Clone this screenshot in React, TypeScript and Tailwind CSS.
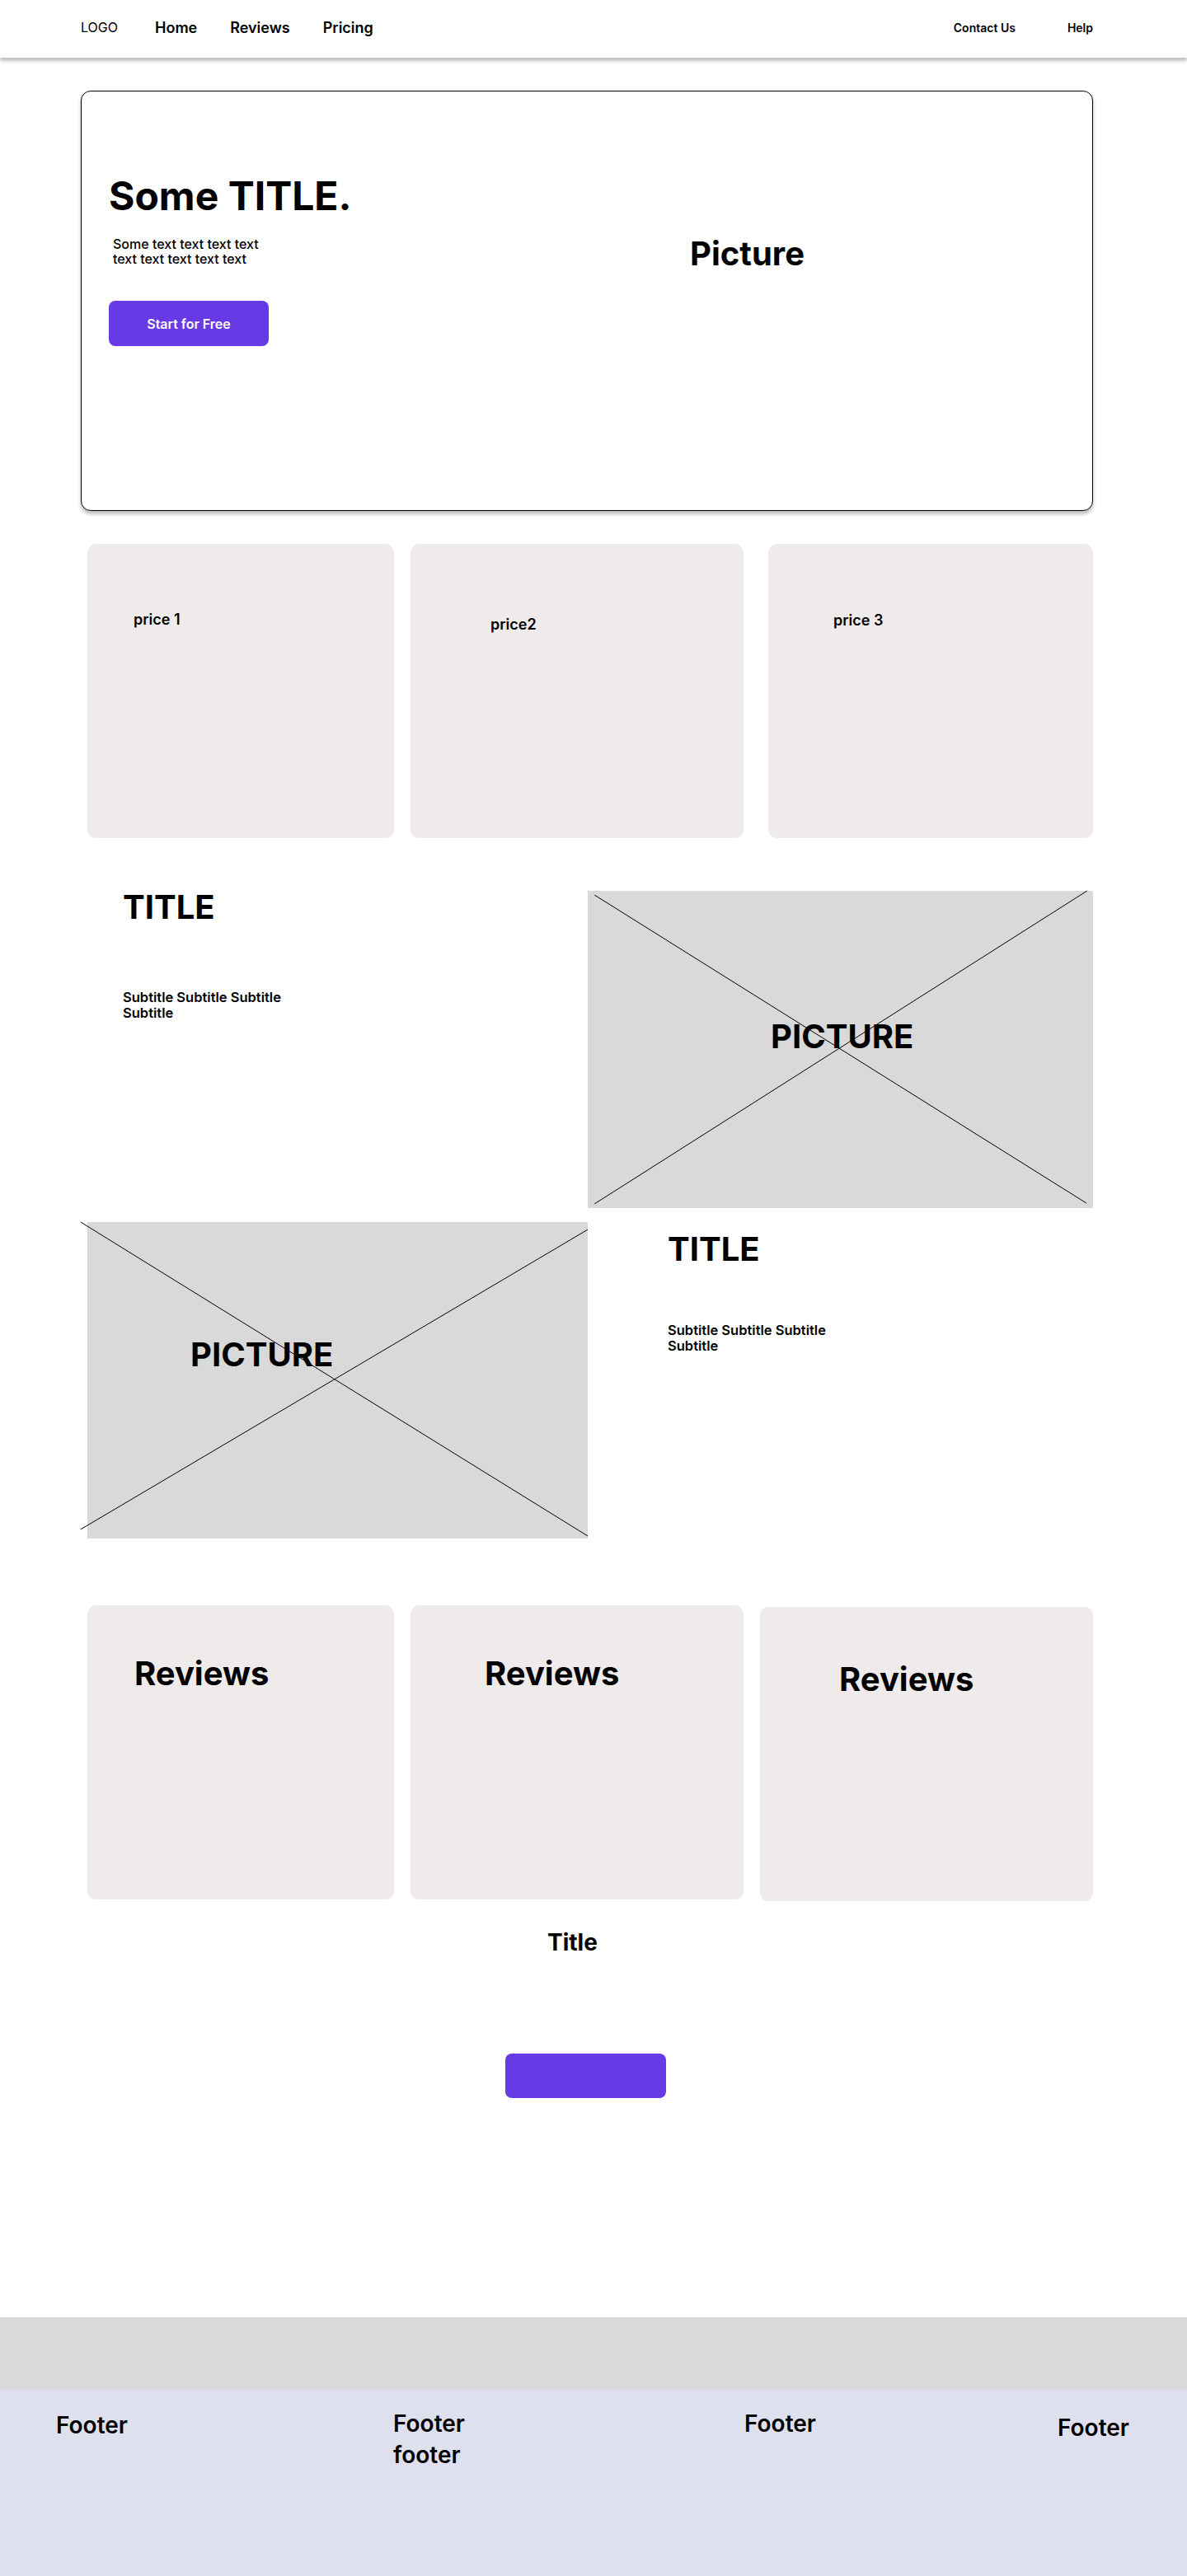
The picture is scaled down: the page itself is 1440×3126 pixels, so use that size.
import React from "react";

function CrossPicture({ label, labelClass, lines }: { label: string; labelClass: string; lines: { x1: number; y1: number; x2: number; y2: number }[] }) {
  return (
    <div className="relative h-full w-full bg-[#d9d9d9]">
      <svg className="absolute inset-0 h-full w-full overflow-visible" viewBox="0 0 600 380" preserveAspectRatio="none">
        {lines.map((l, i) => (
          <line key={i} x1={l.x1} y1={l.y1} x2={l.x2} y2={l.y2} stroke="#000" strokeWidth="1" vectorEffect="non-scaling-stroke" />
        ))}
      </svg>
      <div className={`relative text-[40px] font-bold leading-none text-black ${labelClass}`}>{label}</div>
    </div>
  );
}

export default function App() {
  return (
    <div className="min-h-[3126px] bg-white text-black" style={{ fontFamily: "Inter, 'Noto Sans', sans-serif" }}>
      {/* Nav */}
      <nav className="flex h-[70px] items-center justify-between bg-white pb-1 pl-[98px] pr-[114px] shadow-[0_4px_4px_rgba(0,0,0,0.25)]">
        <div className="flex items-center">
          <span className="text-[16px] font-normal">LOGO</span>
          <a className="ml-[45px] text-[18px] font-semibold">Home</a>
          <a className="ml-[40px] text-[18px] font-semibold">Reviews</a>
          <a className="ml-[40px] text-[18px] font-semibold">Pricing</a>
        </div>
        <div className="flex items-center gap-[63px] text-[14px] font-semibold">
          <a>Contact Us</a>
          <a>Help</a>
        </div>
      </nav>

      {/* Hero */}
      <section className="ml-[98px] mt-[40px] flex h-[510px] w-[1228px] rounded-[12px] border border-black bg-white pl-[33px] pt-[103px] shadow-[0_4px_4px_rgba(0,0,0,0.25)]">
        <div className="w-[705px]">
          <h1 className="text-[48px] font-bold leading-none">Some TITLE.</h1>
          <p className="ml-[5px] mt-[25px] w-[200px] text-[16px] font-medium leading-[18px]">
            Some text text text text text text text text text
          </p>
          <button className="mt-[42px] h-[55px] w-[194px] rounded-[8px] bg-[#673ae5] text-[16px] font-semibold text-white">
            Start for Free
          </button>
        </div>
        <div className="mt-[74px] text-[40px] font-bold leading-none">Picture</div>
      </section>

      {/* Pricing */}
      <section className="ml-[106px] mt-[40px] flex h-[357px] w-[1220px]">
        <div className="w-[372px] rounded-[10px] bg-[#efebeb] pl-[56px] pt-[83px] text-[18px] font-semibold leading-none">price 1</div>
        <div className="ml-[20px] w-[404px] rounded-[10px] bg-[#efebeb] pl-[97px] pt-[89px] text-[18px] font-semibold leading-none">price2</div>
        <div className="ml-[30px] w-[394px] rounded-[10px] bg-[#efebeb] pl-[79px] pt-[84px] text-[18px] font-semibold leading-none">price 3</div>
      </section>

      {/* Feature A */}
      <section className="ml-[106px] mt-[64px] flex h-[385px] w-[1220px]">
        <div className="w-[607px] pl-[43px]">
          <h2 className="text-[40px] font-bold leading-none">TITLE</h2>
          <p className="mt-[80px] w-[230px] text-[16.5px] font-semibold leading-[19px]">Subtitle Subtitle Subtitle Subtitle</p>
        </div>
        <div className="w-[613px]">
          <CrossPicture
            label="PICTURE"
            labelClass="pl-[222px] pt-[157px]"
            lines={[
              { x1: 8, y1: 5, x2: 592, y2: 374 },
              { x1: 593, y1: 0, x2: 8, y2: 375 },
            ]}
          />
        </div>
      </section>

      {/* Feature B */}
      <section className="ml-[106px] mt-[17px] flex h-[384px] w-[1220px]">
        <div className="w-[607px]">
          <CrossPicture
            label="PICTURE"
            labelClass="pl-[125px] pt-[141px]"
            lines={[
              { x1: -8, y1: 0, x2: 600, y2: 377 },
              { x1: 600, y1: 9, x2: -8, y2: 369 },
            ]}
          />
        </div>
        <div className="pl-[97px] pt-[13px]">
          <h2 className="text-[40px] font-bold leading-none">TITLE</h2>
          <p className="mt-[69px] w-[230px] text-[16.5px] font-semibold leading-[19px]">Subtitle Subtitle Subtitle Subtitle</p>
        </div>
      </section>

      {/* Reviews */}
      <section className="ml-[106px] mt-[81px] flex w-[1220px] items-start">
        <div className="h-[357px] w-[372px] rounded-[10px] bg-[#efebeb] pl-[57px] pt-[63px] text-[40px] font-bold leading-none">Reviews</div>
        <div className="ml-[20px] h-[357px] w-[404px] rounded-[10px] bg-[#efebeb] pl-[90px] pt-[63px] text-[40px] font-bold leading-none">Reviews</div>
        <div className="ml-[20px] mt-[2px] h-[357px] w-[404px] rounded-[10px] bg-[#efebeb] pl-[96px] pt-[68px] text-[40px] font-bold leading-none">Reviews</div>
      </section>

      <h3 className="mt-[36px] pl-[664px] text-[28px] font-bold leading-none">Title</h3>

      <div className="ml-[613px] mt-[121px] h-[54px] w-[195px] rounded-[8px] bg-[#673ae5]" />

      {/* Footer */}
      <div className="mt-[266px] h-[88px] bg-[#d9d9d9]" />
      <footer className="flex h-[228px] bg-[#dfe0ee] text-[28px] font-semibold leading-[38px]">
        <div className="ml-[68px] w-[409px] pt-[24px]">Footer</div>
        <div className="w-[426px] pt-[22px]">
          Footer
          <br />
          footer
        </div>
        <div className="w-[380px] pt-[22px]">Footer</div>
        <div className="pt-[27px]">Footer</div>
      </footer>
    </div>
  );
}
